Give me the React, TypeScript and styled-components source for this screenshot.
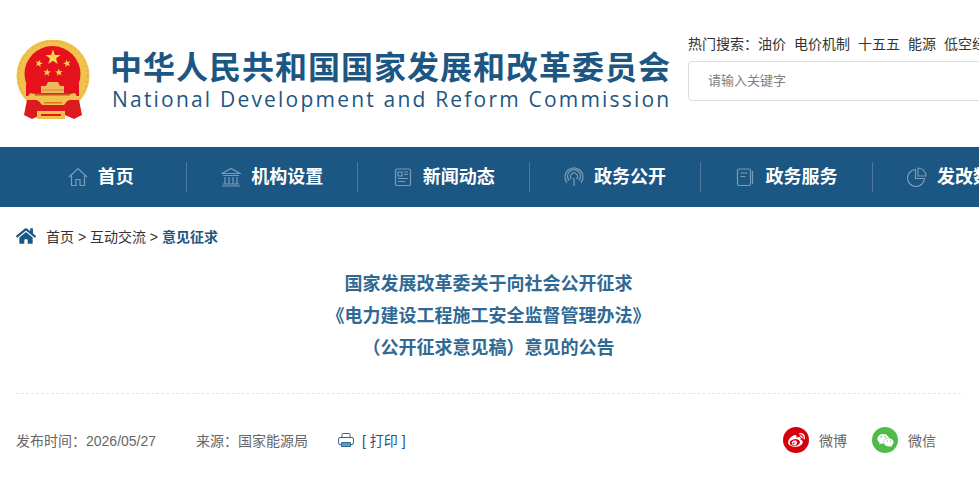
import styled, { createGlobalStyle } from "styled-components";
import { FaHome, FaWeibo, FaWeixin } from "react-icons/fa";

const GlobalStyle = createGlobalStyle`
  html, body {
    margin: 0;
    padding: 0;
    height: 100%;
    overflow: hidden;
    background: #fff;
  }
  body {
    font-family: "Liberation Sans", "Noto Sans CJK SC", sans-serif;
  }
`;

const Page = styled.div`
  width: 1200px;
`;
const Header = styled.header`
  height: 147px;
  box-sizing: border-box;
  padding: 40px 0 0 16px;
  display: flex;
  align-items: flex-start;
`;
const Logo = styled.div`
  display: flex;
  align-items: flex-start;
  width: 672px;
`;
const Emblem = styled.svg`
  width: 74px;
  height: 80px;
  flex: none;
`;
const Wordmark = styled.div`
  margin: 10px 0 0 20px;
  color: #1c5683;
  white-space: nowrap;
`;
const WordmarkCn = styled.div`
  font-size: 32px;
  font-weight: 700;
  line-height: 37px;
  letter-spacing: 1px;
`;
const WordmarkEn = styled.div`
  font-family: "Open Sans", sans-serif;
  font-size: 21px;
  line-height: 24px;
  margin-left: 2px;
  letter-spacing: 2.2px;
`;
const SearchBlock = styled.div`
  width: 512px;
  margin-top: -5px;
`;
const HotWords = styled.div`
  display: flex;
  gap: 8px;
  font-size: 14px;
  line-height: 18px;
  color: #333;
  white-space: nowrap;
`;
const HotLabel = styled.span`
  margin-right: -8px;
  width: 70px;
`;
const SearchInput = styled.input`
  display: block;
  box-sizing: border-box;
  width: 100%;
  height: 40px;
  margin-top: 8px;
  padding: 0 19px 2px;
  border: 1px solid #ddd;
  border-radius: 4px;
  font: 13px "Liberation Sans", "Noto Sans CJK SC", sans-serif;
  outline: none;
  &::placeholder {
    color: #808080;
    opacity: 1;
  }
`;
const Nav = styled.nav`
  height: 60px;
  background: #1c5683;
`;
const NavList = styled.div`
  display: grid;
  grid-template-columns: repeat(7, 171.43px);
  height: 100%;
  margin-left: 15.6px;
  align-items: center;
`;
const NavItem = styled.a<{ $last?: boolean }>`
  height: 30px;
  display: flex;
  align-items: center;
  justify-content: center;
  gap: 10px;
  color: #fff;
  font-size: 18px;
  line-height: 28px;
  font-weight: 700;
  border-right: ${(p) => (p.$last ? "none" : "1px solid #4d7a9c")};
  white-space: nowrap;
`;
const NavIcon = styled.svg`
  width: 20px;
  height: 20px;
  flex: none;
  fill: none;
  stroke: #7b9cb8;
  stroke-width: 1.2;
`;
const Article = styled.main`
  width: 945px;
  margin-left: 16px;
`;
const Crumbs = styled.div`
  height: 60px;
  padding-bottom: 2px;
  box-sizing: border-box;
  display: flex;
  align-items: center;
  font-size: 14px;
  color: #333;
  white-space: nowrap;
`;
const CrumbIcon = styled(FaHome)`
  width: 20px;
  height: 18px;
  margin-right: 10px;
  color: #1c5683;
`;
const CrumbCurrent = styled.b`
  color: #1c5683;
`;
const Title = styled.h1`
  margin: 0;
  padding: 1px 0 29px;
  border-bottom: 1px dashed #e6e6e6;
  text-align: center;
  font-size: 18px;
  font-weight: 700;
  line-height: 32px;
  color: #2f6a94;
`;
const Meta = styled.div`
  height: 92px;
  padding-right: 25px;
  display: flex;
  align-items: center;
  font-size: 14px;
  color: #666;
  white-space: nowrap;
`;
const MetaText = styled.span`
  margin-right: 40px;
`;
const SourceText = styled.span`
  margin-right: 30px;
`;
const PrintLink = styled.a`
  display: flex;
  align-items: center;
  gap: 8px;
  color: #1c5683;
  font-size: 14px;
`;
const Shares = styled.div`
  margin-left: auto;
  display: flex;
  gap: 25px;
`;
const Share = styled.a`
  display: flex;
  align-items: center;
  gap: 10px;
  color: #666;
  font-size: 14px;
`;
const ShareBadge = styled.span<{ $bg: string }>`
  width: 26px;
  height: 26px;
  border-radius: 50%;
  background: ${(p) => p.$bg};
  color: #fff;
  display: flex;
  align-items: center;
  justify-content: center;
  font-size: 17px;
`;

const star = "M0,-1 L.235,-.324 L.951,-.309 L.38,.124 L.588,.809 L0,.4 L-.588,.809 L-.38,.124 L-.951,-.309 L-.235,-.324 Z";

const StateEmblem = () => (
  <Emblem viewBox="0 0 74 80">
    {/* gold wreath, red disc */}
    <circle cx="37" cy="36" r="36.5" fill="#f1c14e" />
    <circle cx="37" cy="36" r="34.5" fill="none" stroke="#e4a52f" strokeWidth="1" strokeDasharray="2 3" />
    <circle cx="36.5" cy="34" r="28" fill="#e5121d" />
    <path d="M10 44 H63 V56 H10 Z" fill="#e5121d" />
    {/* ribbons */}
    <path d="M11 60 L8 75 L16 79 L25 75 H49 L58 79 L66 75 L63 60 Z" fill="#dc1a1f" />
    {/* gate */}
    <path d="M30 46 L32 42 H42 L44 46 H48 V53 H25 V46 Z" fill="#eeb95a" />
    <path d="M26 49.5 H48 V50.5 H26 Z" fill="#d98b3a" />
    <path d="M14 53 Q24 55 37 55 Q50 55 59 53 L62 58 Q52 59 47 64 H27 Q22 59 11 58 Z" fill="#f1c14e" />
    <path d="M19 53.5 H54 V55.5 H19 Z" fill="#c9561f" />
    <path d="M22 60 L29 57 L33 60 L37 57 L41 60 L45 57 L52 60 L48 65 H26 Z" fill="#f1c14e" />
    <path d="M28 62 H46 V63.5 H28 Z" fill="#d8731e" />
    <path d="M21 71 H49 V79 H21 Z" fill="#f1c14e" />
    <path d="M25 74 H45 V76 H25 Z" fill="#dc1a1f" />
    <path d="M30 65 H44 L48 71 H26 Z" fill="#dc1a1f" />
    <g fill="#f8d84c">
      <path d={star} transform="translate(37 17.5) scale(8)" />
      <path d={star} transform="translate(23 23.5) scale(4) rotate(15)" />
      <path d={star} transform="translate(51 23.5) scale(4) rotate(-15)" />
      <path d={star} transform="translate(31 32.5) scale(4) rotate(5)" />
      <path d={star} transform="translate(43 32.5) scale(4) rotate(-5)" />
    </g>
  </Emblem>
);

const PrintIcon = () => (
  <svg width="16" height="14" viewBox="0 0 16 14">
    <path d="M4 4.5 V1.5 Q4 .5 5 .5 H11 Q12 .5 12 1.5 V4.5 M3 11.5 H2 Q.6 11.5 .6 10 V6 Q.6 4.5 2 4.5 H14 Q15.4 4.5 15.4 6 V10 Q15.4 11.5 14 11.5 H13" fill="none" stroke="#2f6a94" strokeWidth="1" />
    <path d="M3.5 9.5 H12.5 V13.5 H3.5 Z" fill="#6f95b2" stroke="#2f6a94" />
  </svg>
);

const navItems = [
  {
    label: "首页",
    icon: <path d="M1 10 L10 1.5 L19 10 M3.5 8.5 V18.5 H8 V12.5 H12 V18.5 H16.5 V8.5" />,
  },
  {
    label: "机构设置",
    icon: <path d="M1 6.5 L10 1.5 L19 6.5 Z M2 8.5 H18 M4 10 V16.5 M8 10 V16.5 M12 10 V16.5 M16 10 V16.5 M2 17 H18 M1 19 H19" />,
  },
  {
    label: "新闻动态",
    icon: <path d="M4 2 H16 Q17.5 2 17.5 3.5 V17 Q17.5 18.5 16 18.5 H4 Q2.5 18.5 2.5 17 V3.5 Q2.5 2 4 2 Z M5 5 H9 V9 H5 Z M11 5 H15 M11 7.5 H15 M5 11.5 H15 M5 14.5 H12" />,
  },
  {
    label: "政务公开",
    icon: <path d="M10 11 V19 M5.2 13.5 A6.5 6.5 0 1 1 14.8 13.5 M3 15.5 A9 9 0 1 1 17 15.5 M7.5 12 A3.5 3.5 0 1 1 12.5 12" />,
  },
  {
    label: "政务服务",
    icon: <path d="M4 2 H14 Q15.5 2 15.5 3.5 V17 Q15.5 18.5 14 18.5 H4 Q2.5 18.5 2.5 17 V3.5 Q2.5 2 4 2 Z M5.5 6 H12.5 M5.5 9.5 H10.5 M17.5 4 V17" />,
  },
  {
    label: "发改数据",
    icon: <path d="M8.5 2.5 A8.5 8.5 0 1 0 17.5 11.5 H8.5 Z M11 1 A8 8 0 0 1 19 9 H11 Z" />,
  },
  { label: "专题专栏", icon: <path d="M3 3 H17 V17 H3 Z" /> },
];

const hotWords = ["油价", "电价机制", "十五五", "能源", "低空经济"];

const App = () => (
  <Page>
    <GlobalStyle />
    <Header>
      <Logo>
        <StateEmblem />
        <Wordmark>
          <WordmarkCn>中华人民共和国国家发展和改革委员会</WordmarkCn>
          <WordmarkEn>National Development and Reform Commission</WordmarkEn>
        </Wordmark>
      </Logo>
      <SearchBlock>
        <HotWords>
          <HotLabel>热门搜索：</HotLabel>
          {hotWords.map((w) => (
            <span key={w}>{w}</span>
          ))}
        </HotWords>
        <SearchInput placeholder="请输入关键字" />
      </SearchBlock>
    </Header>
    <Nav>
      <NavList>
        {navItems.map((item, i) => (
          <NavItem key={item.label} $last={i === navItems.length - 1}>
            <NavIcon viewBox="0 0 20 20">{item.icon}</NavIcon>
            {item.label}
          </NavItem>
        ))}
      </NavList>
    </Nav>
    <Article>
      <Crumbs>
        <CrumbIcon />
        首页 &gt; 互动交流 &gt;&nbsp;<CrumbCurrent>意见征求</CrumbCurrent>
      </Crumbs>
      <Title>
        国家发展改革委关于向社会公开征求
        <br />
        《电力建设工程施工安全监督管理办法》
        <br />
        （公开征求意见稿）意见的公告
      </Title>
      <Meta>
        <MetaText>发布时间：2026/05/27</MetaText>
        <SourceText>来源：国家能源局</SourceText>
        <PrintLink>
          <PrintIcon />[ 打印 ]
        </PrintLink>
        <Shares>
          <Share>
            <ShareBadge $bg="#d7000f">
              <FaWeibo />
            </ShareBadge>
            微博
          </Share>
          <Share>
            <ShareBadge $bg="#4fbb4a">
              <FaWeixin />
            </ShareBadge>
            微信
          </Share>
        </Shares>
      </Meta>
    </Article>
  </Page>
);

export default App;
